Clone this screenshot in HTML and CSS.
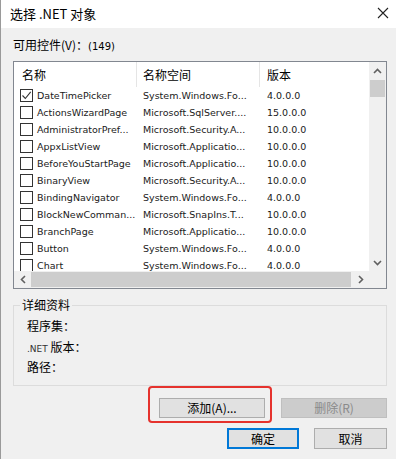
FILE: index.html
```html
<!doctype html>
<html lang="zh-CN">

<head>
    <meta charset="UTF-8">
    <meta name="viewport" content="width=device-width, initial-scale=1.0">
    <title>选择 .NET 对象</title>
    <link rel="stylesheet" href="styles.css">
</head>

<body>
    <div class="window">
        <div class="titlebar">
            <span class="title">选择 .NET 对象</span>
            <svg class="close" width="12" height="12" viewBox="0 0 12 12">
                <path d="M1 1 L11 11 M11 1 L1 11" stroke="#222" stroke-width="1.1" fill="none" />
            </svg>
        </div>

        <div class="content">
            <div class="caption">可用控件(V)：<span class="latin">(149)</span></div>

            <div class="listbox">
                <div class="grid">
                    <div class="header">
                        <div class="col c1">名称</div>
                        <div class="col c2">名称空间</div>
                        <div class="col c3">版本</div>
                    </div>
                    <div class="rows">
                        <div class="row"><div class="col c1"><span class="check on"><svg width="11" height="11" viewBox="0 0 11 11"><path d="M1.5 5.5 L4.3 8.5 L9.7 1.8" stroke="#333" stroke-width="1.1" fill="none" /></svg></span>DateTimePicker</div><div class="col c2">System.Windows.Fo...</div><div class="col c3">4.0.0.0</div></div>
                        <div class="row"><div class="col c1"><span class="check"></span>ActionsWizardPage</div><div class="col c2">Microsoft.SqlServer....</div><div class="col c3">15.0.0.0</div></div>
                        <div class="row"><div class="col c1"><span class="check"></span>AdministratorPref...</div><div class="col c2">Microsoft.Security.A...</div><div class="col c3">10.0.0.0</div></div>
                        <div class="row"><div class="col c1"><span class="check"></span>AppxListView</div><div class="col c2">Microsoft.Applicatio...</div><div class="col c3">10.0.0.0</div></div>
                        <div class="row"><div class="col c1"><span class="check"></span>BeforeYouStartPage</div><div class="col c2">Microsoft.Applicatio...</div><div class="col c3">10.0.0.0</div></div>
                        <div class="row"><div class="col c1"><span class="check"></span>BinaryView</div><div class="col c2">Microsoft.Security.A...</div><div class="col c3">10.0.0.0</div></div>
                        <div class="row"><div class="col c1"><span class="check"></span>BindingNavigator</div><div class="col c2">System.Windows.Fo...</div><div class="col c3">4.0.0.0</div></div>
                        <div class="row"><div class="col c1"><span class="check"></span>BlockNewComman...</div><div class="col c2">Microsoft.SnapIns.T...</div><div class="col c3">10.0.0.0</div></div>
                        <div class="row"><div class="col c1"><span class="check"></span>BranchPage</div><div class="col c2">Microsoft.Applicatio...</div><div class="col c3">10.0.0.0</div></div>
                        <div class="row"><div class="col c1"><span class="check"></span>Button</div><div class="col c2">System.Windows.Fo...</div><div class="col c3">4.0.0.0</div></div>
                        <div class="row"><div class="col c1"><span class="check"></span>Chart</div><div class="col c2">System.Windows.Fo...</div><div class="col c3">4.0.0.0</div></div>
                    </div>
                </div>

                <div class="vscroll">
                    <div class="arrow"><svg width="9" height="6" viewBox="0 0 9 6"><path d="M1 5 L4.5 1.5 L8 5" stroke="#606060" stroke-width="1.6" fill="none" /></svg></div>
                    <div class="vthumb"></div>
                    <div class="track"></div>
                    <div class="arrow"><svg width="9" height="6" viewBox="0 0 9 6"><path d="M1 1 L4.5 4.5 L8 1" stroke="#606060" stroke-width="1.6" fill="none" /></svg></div>
                </div>

                <div class="hscroll">
                    <div class="arrow"><svg width="6" height="9" viewBox="0 0 6 9"><path d="M5 1 L1.5 4.5 L5 8" stroke="#606060" stroke-width="1.6" fill="none" /></svg></div>
                    <div class="hthumb"></div>
                    <div class="arrow"><svg width="6" height="9" viewBox="0 0 6 9"><path d="M1 1 L4.5 4.5 L1 8" stroke="#606060" stroke-width="1.6" fill="none" /></svg></div>
                </div>

                <div class="corner"></div>
            </div>

            <fieldset class="details">
                <legend>详细资料</legend>
                <div class="field">程序集：</div>
                <div class="field"><span class="latin small">.NET</span> 版本：</div>
                <div class="field">路径：</div>
            </fieldset>

            <div class="actions">
                <div class="btn-wrap">
                    <button class="btn wide">添加(A)...</button>
                    <span class="highlight"></span>
                </div>
                <button class="btn wide disabled">删除(R)</button>
            </div>

            <div class="actions bottom">
                <button class="btn ok">确定</button>
                <button class="btn cancel">取消</button>
            </div>
        </div>
    </div>
</body>

</html>
```

FILE: styles.css
```css
* {
    box-sizing: border-box;
    font-family: "Noto Sans CJK SC", "Liberation Sans", sans-serif;
}

body {
    margin: 0;
    background: #f0f0f0;
}

.window {
    width: 396px;
    height: 459px;
    background: #f0f0f0;
    border-left: 1px solid #9a9a9a;
    overflow: hidden;
}

.titlebar {
    height: 28px;
    background: #ffffff;
    display: flex;
    align-items: center;
    justify-content: space-between;
    padding: 0 7px 2px 9px;
}

.title {
    font-size: 13px;
    color: #000;
}

.content {
    padding: 0 9px 0 12px;
}

.caption {
    font-size: 12px;
    line-height: 16px;
    margin-top: 9px;
    color: #000;
}

.latin {
    font-family: "DejaVu Sans", sans-serif;
    font-size: 10px;
}

.latin.small {
    font-size: 9px;
    color: #333;
}

/* list view */
.listbox {
    margin-top: 6px;
    width: 374px;
    height: 228px;
    border: 1px solid #828790;
    background: #ffffff;
    display: grid;
    grid-template-columns: 355px 17px;
    grid-template-rows: 209px 17px;
}

.grid {
    overflow: hidden;
}

.header {
    display: flex;
    height: 25px;
    align-items: stretch;
    font-size: 12px;
}

.header .col {
    display: flex;
    align-items: center;
    border-right: 1px solid #e5e5e5;
}

.col {
    flex: none;
    white-space: nowrap;
    overflow: hidden;
}

.c1 {
    width: 123px;
    padding-left: 8px;
}

.c2 {
    width: 123px;
    padding-left: 6px;
}

.c3 {
    width: 123px;
    padding-left: 7px;
}

.row {
    display: flex;
    height: 17px;
    align-items: center;
    font-family: "DejaVu Sans", sans-serif;
    font-size: 9.5px;
    color: #1a1a1a;
}

.row .col {
    font-family: inherit;
    display: flex;
    align-items: center;
}

.row .c1 {
    padding-left: 6px;
}

.check {
    width: 13px;
    height: 13px;
    border: 1px solid #333;
    margin-right: 4px;
    flex: none;
    display: flex;
    align-items: center;
    justify-content: center;
}

.vscroll {
    background: #f0f0f0;
    display: flex;
    flex-direction: column;
}

.arrow {
    height: 17px;
    flex: none;
    display: flex;
    align-items: center;
    justify-content: center;
}

.vthumb {
    height: 17px;
    margin: 1px 1px 0 1px;
    background: #cdcdcd;
}

.track {
    flex: 1;
}

.hscroll {
    background: #f0f0f0;
    display: flex;
}

.hscroll .arrow {
    width: 17px;
    height: 17px;
}

.hthumb {
    flex: 1;
    margin: 1px 1px 1px 0;
    background: #cdcdcd;
}

.corner {
    background: #f0f0f0;
}

/* details group */
.details {
    margin: 9px 0 0 0;
    width: 374px;
    height: 88px;
    border: 1px solid #dcdcdc;
    padding: 4px 0 0 13px;
}

.details legend {
    font-size: 12px;
    padding: 0 2px;
    margin-left: -7px;
    line-height: 14px;
}

.field {
    font-size: 12px;
    line-height: 20px;
    height: 20.5px;
    color: #000;
}

/* buttons */
.actions {
    display: flex;
    justify-content: flex-end;
    gap: 16px;
    margin-top: 12px;
    width: 374px;
}

.actions.bottom {
    margin-top: 10px;
    gap: 15px;
}

.btn {
    height: 20px;
    background: #e1e1e1;
    border: 1px solid #adadad;
    font-size: 12px;
    color: #000;
    padding: 0;
    line-height: 16px;
}

.btn.wide {
    width: 106px;
}

.btn.disabled {
    background: #cccccc;
    border-color: #bfbfbf;
    color: #8a8a8a;
}

.btn.ok {
    width: 72px;
    height: 21px;
    border: 2px solid #0078d7;
}

.btn.cancel {
    width: 73px;
    height: 21px;
}

.btn-wrap {
    position: relative;
    display: flex;
}

.highlight {
    position: absolute;
    left: -11px;
    top: -12px;
    width: 124px;
    height: 37px;
    border: 2.5px solid #e5322d;
    border-radius: 4px;
}
```
